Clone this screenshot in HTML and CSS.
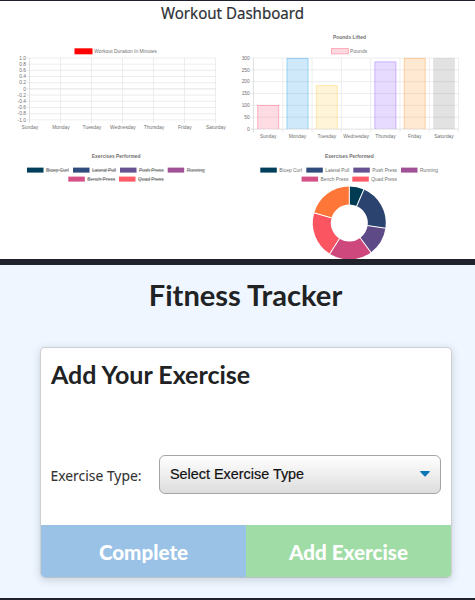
FILE: index.html
```html
<!DOCTYPE html>
<html lang="en">
<head>
<meta charset="utf-8">
<title>Fitness Tracker</title>
<link rel="stylesheet" href="styles.css">
</head>
<body>
<section class="dashboard">
  <h1 class="dashboard-title"><svg width="475" height="29" viewBox="0 1 475 29"><text class="heading-text" x="161" y="19.4" textLength="143" lengthAdjust="spacingAndGlyphs">Workout Dashboard</text></svg></h1>
  <div class="charts">
    <svg id="duration" class="chart" viewBox="0 30 237 115"></svg>
    <svg id="pounds" class="chart" viewBox="237 30 238 115"></svg>
    <svg id="exercises" class="chart" viewBox="0 145 237 114"></svg>
    <svg id="share" class="chart" viewBox="237 145 238 114"></svg>
  </div>
</section>
<main class="tracker">
  <h2 class="tracker-title">Fitness Tracker</h2>
  <form class="card">
    <h3 class="card-title">Add Your Exercise</h3>
    <div class="field">
      <svg class="field-label" width="108" height="38" viewBox="0 0 108 38"><text class="label-text" x="-.5" y="25.7" textLength="91" lengthAdjust="spacingAndGlyphs">Exercise Type:</text></svg>
      <div class="select"><span>Select Exercise Type</span><svg width="10" height="6" viewBox="0 0 10 6"><path d="M.4 0H9.6Q10 .4 9.6 .9L5.6 5.3Q5 5.8 4.4 5.3L.4 .9Q0 .4 .4 0Z" fill="#0875b5"/></svg></div>
    </div>
    <div class="actions">
      <button type="button" class="complete">Complete</button>
      <button type="button" class="add">Add Exercise</button>
    </div>
  </form>
</main>
<script src="charts.js"></script>
</body>
</html>
```
FILE: styles.css
```css
* { box-sizing: border-box; }
body { margin: 0; width: 475px; height: 600px; overflow: hidden; background: #20222b; }
h1, h2, h3 { margin: 0; }
.dashboard { height: 259px; border-top: 1px solid #20202d; background: #fff; }
.dashboard-title { height: 29px; }
.dashboard-title svg { display: block; }
.heading-text { font: 16.8px "Noto Sans", sans-serif; fill: #2d3035; stroke: #2d3035; stroke-width: .2px; }
.charts { display: grid; grid-template-columns: 237px 238px; grid-template-rows: 115px 114px; }
.chart { display: block; width: 100%; height: 100%; font-family: "Liberation Sans", Arial, sans-serif; font-size: 4.9px; fill: #707070; }
.bold { font-weight: bold; }
.tracker { margin-top: 6px; height: 333px; background: #eff6ff; padding-top: 12px; }
.tracker-title { height: 70px; font: bold 29.1px/36px Lato, sans-serif; color: #202224; text-align: center; padding-left: 16px; }
.card { margin-left: 40px; width: 412px; height: 231px; background: #fff; border: 1px solid #cdcfd2; border-bottom-color: #b9c4c9; border-radius: 5px; overflow: hidden; box-shadow: 0 2px 8px rgba(40, 55, 75, .2); display: flex; flex-direction: column; }
.card-title { height: 107px; padding: 10px 0 0 10px; font: bold 25px/32px Lato, sans-serif; color: #202224; }
.field { display: flex; padding-left: 10px; height: 70px; }
.label-text { font: 14.4px "Noto Sans", sans-serif; fill: #333; stroke: #333; stroke-width: .1px; }
.field-label { overflow: visible; }
.select { width: 282px; height: 39px; border: 1px solid #a5a5a5; border-radius: 6px; background: linear-gradient(#fff, #ddd); display: flex; align-items: center; justify-content: space-between; padding: 0 10px 1px 10px; font: 14.4px "Liberation Sans", Arial, sans-serif; color: #111; -webkit-text-stroke: .2px #111; }
.actions { display: flex; flex: 1; }
.actions button { border: 0; padding: 2px 0 0; color: #fff; font: 900 20.6px Lato, sans-serif; width: 205px; }
.actions .complete { background: #99c2e6; }
.actions .add { background: #a0dca5; }
```
FILE: charts.js
```js
const days = ["Sunday", "Monday", "Tuesday", "Wednesday", "Thursday", "Friday", "Saturday"];
const NS = "http://www.w3.org/2000/svg";

function add(id, tag, attrs, text) {
  const el = document.createElementNS(NS, tag);
  for (const key in attrs) el.setAttribute(key, attrs[key]);
  if (text) el.textContent = text;
  document.getElementById(id).appendChild(el);
}
function line(id, x1, y1, x2, y2, stroke = "#e0e0e0", width = 0.6) {
  add(id, "line", { x1, y1, x2, y2, stroke, "stroke-width": width });
}
function label(id, x, y, text, anchor = "middle") {
  add(id, "text", { x, y, "text-anchor": anchor }, text);
}

// Workout duration
add("duration", "rect", { x: 74.5, y: 48.3, width: 18, height: 6, fill: "#f00" });
add("duration", "text", { x: 94.3, y: 53, textLength: 62.5 }, "Workout Duration In Minutes");
["1.0", "0.8", "0.6", "0.4", "0.2", "0", "-0.2", "-0.4", "-0.6", "-0.8", "-1.0"].forEach((v, i) => {
  const y = 58 + i * 6.18;
  line("duration", 26.5, y, 215.6, y, i === 5 ? "#ccc" : undefined);
  label("duration", 26, y + 1.7, v, "end");
});
days.forEach((day, i) => {
  const x = 29.5 + i * 31;
  line("duration", x, 58, x, 123, i ? undefined : "#ccc");
  label("duration", x + 0.4, 128.6, day);
});

// Pounds lifted
add("pounds", "text", { x: 333, y: 39.4, textLength: 33, class: "bold" }, "Pounds Lifted");
add("pounds", "rect", { x: 331.5, y: 48.6, width: 16.8, height: 5.2, fill: "#ffd9e0", stroke: "#ffa8b9" });
add("pounds", "text", { x: 350, y: 53, textLength: 17.3 }, "Pounds");
[300, 250, 200, 150, 100, 50, 0].forEach((v, i) => {
  const y = 58 + i * 11.85;
  line("pounds", 250.5, y, 458.5, y, v ? undefined : "#ccc");
  label("pounds", 249.8, y + 1.7, String(v), "end");
});
for (let i = 0; i < 8; i++) {
  const x = 253.5 + i * 29.3;
  if (x < 459) line("pounds", x, 58, x, 132.5, i ? undefined : "#ccc");
}
const bars = [
  [105, "255,99,132"], [58, "54,162,235"], [85.2, "255,206,86"], null,
  [61.5, "153,102,255"], [58, "255,159,64"], [58, "130,130,130"]
];
days.forEach((day, i) => {
  const x = 268.2 + i * 29.3;
  label("pounds", x, 137.8, day);
  if (!bars[i]) return;
  const [y, rgb] = bars[i];
  add("pounds", "rect", { x: x - 10.9, y, width: 21.8, height: 129 - y, fill: `rgba(${rgb},.23)` });
  if (i < 6) add("pounds", "path", { d: `M${x - 10.5} 129V${y + 0.4}H${x + 10.5}V129`, fill: "none", stroke: `rgba(${rgb},.4)`, "stroke-width": 0.9 });
});

// Exercise legends; entries are x, y, text width, colour, name
const legend = [
  [27, 167.6, 22.8, "#003f5c", "Bicep Curl"],
  [73, 167.6, 24, "#2f4b7c", "Lateral Pull"],
  [120, 167.6, 24.7, "#665191", "Push Press"],
  [167.7, 167.6, 18, "#a05195", "Running"],
  [68.3, 176.6, 27.8, "#d45087", "Bench Press"],
  [119, 176.6, 25.6, "#ff5a65", "Quad Press"]
];
for (const [id, dx, struck] of [["exercises", 0, true], ["share", 233.3, false]]) {
  add(id, "text", { x: 91.8 + dx, y: 158.2, textLength: 48.7, class: "bold" }, "Exercises Performed");
  for (const [x, y, w, fill, name] of legend) {
    add(id, "rect", { x: x + dx, y, width: 16.5, height: 5, fill });
    add(id, "text", { x: x + dx + 19, y: y + 4.3, textLength: w }, name);
    if (struck) line(id, x + 19, y + 2.6, x + 19 + w, y + 2.6, "#666", 0.6);
  }
}

// Doughnut
const slices = [
  [0, 23.5, "#003b54"], [23.5, 98, "#2b446f"], [98, 143.7, "#5d4a86"],
  [143.7, 212.3, "#ce477d"], [212.3, 286, "#fb5562"], [286, 360, "#ff7738"]
];
for (const [from, to, stroke] of slices) {
  add("share", "circle", {
    cx: 349.3, cy: 223, r: 27.5, fill: "none", stroke, "stroke-width": 18, pathLength: 360,
    "stroke-dasharray": `${to - from} ${360 - to + from}`, transform: `rotate(${from - 90} 349.3 223)`
  });
}
for (const [from] of slices) {
  add("share", "line", { x1: 349.3, y1: 186, x2: 349.3, y2: 205, stroke: "#fff", "stroke-width": 1, transform: `rotate(${from} 349.3 223)` });
}
```
